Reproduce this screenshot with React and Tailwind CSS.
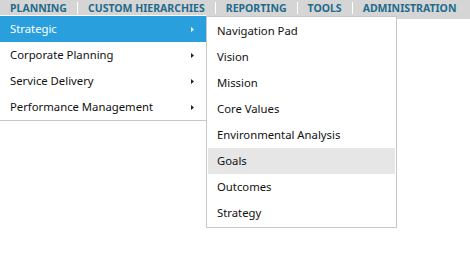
import React from 'react';

const topItems = ['PLANNING', 'CUSTOM HIERARCHIES', 'REPORTING', 'TOOLS', 'ADMINISTRATION'];
const mainItems = ['Strategic', 'Corporate Planning', 'Service Delivery', 'Performance Management'];
const subItems = [
  'Navigation Pad',
  'Vision',
  'Mission',
  'Core Values',
  'Environmental Analysis',
  'Goals',
  'Outcomes',
  'Strategy',
];

const Arrow = ({ color }) => (
  <svg width="3" height="5" viewBox="0 0 3 5" className="shrink-0">
    <path d="M0 0 L3 2.5 L0 5 Z" fill={color} />
  </svg>
);

export default function App() {
  return (
    <div className="relative w-[470px] h-[274px] bg-white overflow-hidden" style={{ fontFamily: '"Noto Sans", "Open Sans", sans-serif' }}>
      {/* top bar */}
      <div className="flex items-center h-[19px] bg-[#d5d5d5] pl-[10px] pb-[3px] whitespace-nowrap">
        {topItems.map((item, i) => (
          <div key={item} className="flex items-center">
            {i > 0 && <div className="w-px h-[12px] bg-white mx-[10px]" />}
            <span className="text-[10.5px] font-bold text-[#1f6b8b] leading-none">{item}</span>
          </div>
        ))}
      </div>

      {/* main dropdown */}
      <div className="absolute left-0 top-[15px] w-[206px] bg-white pt-px border-b border-[#c8c8c8]">
        {mainItems.map((item, i) => (
          <div
            key={item}
            className={`flex items-center justify-between h-[26px] pl-[10px] pr-[12px] pt-px text-[11.3px] whitespace-nowrap ${
              i === 0 ? 'bg-[#29a0dd] text-white' : 'text-[#111]'
            }`}
          >
            <span>{item}</span>
            <Arrow color={i === 0 ? '#ffffff' : '#222222'} />
          </div>
        ))}
      </div>

      {/* sub dropdown */}
      <div className="absolute left-[206px] top-[16px] w-[191px] bg-white border border-[#c6c6c6] p-px">
        {subItems.map((item) => (
          <div
            key={item}
            className={`flex items-center h-[26px] pl-[9px] pt-px text-[11.3px] text-[#111] whitespace-nowrap ${
              item === 'Goals' ? 'bg-[#e6e6e6]' : ''
            }`}
          >
            {item}
          </div>
        ))}
      </div>
    </div>
  );
}
